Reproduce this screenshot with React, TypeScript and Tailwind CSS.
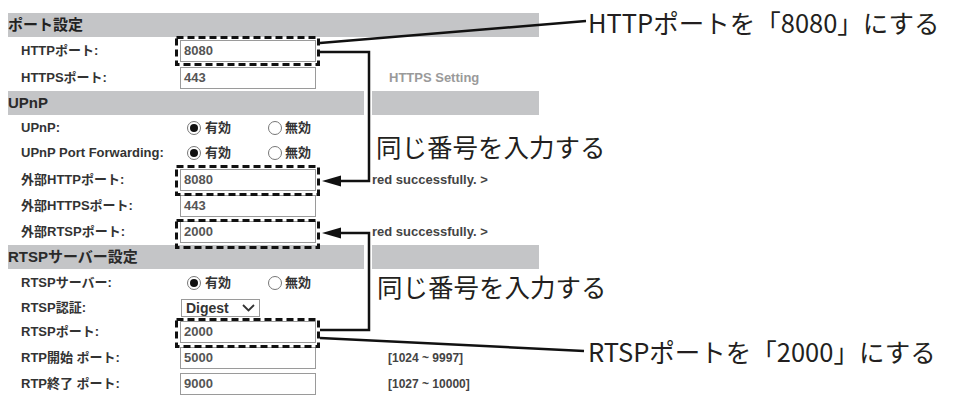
const FONT = "font-['Liberation_Sans','Noto_Sans_CJK_JP',sans-serif]";

type RowProps = {
  h: string;
  label: string;
  children?: React.ReactNode;
  right?: React.ReactNode;
};

function Row({ h, label, children, right }: RowProps) {
  return (
    <div className={`flex items-center ${h}`}>
      <div className="w-[172px] pl-[13px] text-[13px] font-bold text-[#333] whitespace-nowrap">{label}</div>
      <div className="w-[184px] flex items-center">{children}</div>
      <div className="w-[8px]" />
      <div className="w-[167px] flex items-center">{right}</div>
    </div>
  );
}

function Header({ title, split = true }: { title: string; split?: boolean }) {
  if (!split) {
    return (
      <div className="h-[24px] w-[531px] bg-[#c4c5c7] flex items-center text-[15px] font-bold text-[#222]">{title}</div>
    );
  }
  return (
    <div className="flex h-[24px]">
      <div className="w-[356px] bg-[#c4c5c7] flex items-center text-[15px] font-bold text-[#2a2a2a]">{title}</div>
      <div className="w-[8px]" />
      <div className="w-[167px] bg-[#c4c5c7]" />
    </div>
  );
}

function Field({ value }: { value: string }) {
  return (
    <div className="w-[136px] h-[22px] border border-[#9a9a9a] bg-white flex items-center pl-[3px] text-[13px] font-bold text-[#555]">
      {value}
    </div>
  );
}

function Radio({ on }: { on: boolean }) {
  return (
    <span className="w-[14px] h-[14px] rounded-full border border-[#777] bg-white flex items-center justify-center">
      {on && <span className="w-[8px] h-[8px] rounded-full bg-[#111]" />}
    </span>
  );
}

function RadioPair() {
  return (
    <div className="flex items-center pl-[7px] text-[13px] font-bold text-[#333]">
      <div className="w-[81px] flex items-center gap-[4px]">
        <Radio on />
        <span>有効</span>
      </div>
      <div className="flex items-center gap-[3px]">
        <Radio on={false} />
        <span>無効</span>
      </div>
    </div>
  );
}

function Note({ children }: { children: React.ReactNode }) {
  return <span className="text-[13px] font-bold text-[#444] whitespace-nowrap">{children}</span>;
}

export default function App() {
  const annot = "absolute text-[25.5px] leading-none text-[#231f20] font-['Noto_Sans_CJK_JP',sans-serif] whitespace-nowrap";
  return (
    <div className={`relative w-[954px] h-[406px] bg-white overflow-hidden ${FONT}`}>
      <div className="pt-[13px] pl-[8px] w-[539px]">
        <Header title="ポート設定" split={false} />
        <Row h="h-[28px]" label="HTTPポート:">
          <Field value="8080" />
        </Row>
        <Row
          h="h-[26px]"
          label="HTTPSポート:"
          right={<span className="pl-[17px] text-[13px] font-bold text-[#9a9a9a]">HTTPS Setting</span>}
        >
          <Field value="443" />
        </Row>
        <Header title="UPnP" />
        <Row h="h-[25px]" label="UPnP:">
          <RadioPair />
        </Row>
        <Row h="h-[26px]" label="UPnP Port Forwarding:">
          <RadioPair />
        </Row>
        <Row h="h-[27px]" label="外部HTTPポート:" right={<Note>red successfully. &gt;</Note>}>
          <Field value="8080" />
        </Row>
        <Row h="h-[25px]" label="外部HTTPSポート:">
          <Field value="443" />
        </Row>
        <Row h="h-[27px]" label="外部RTSPポート:" right={<Note>red successfully. &gt;</Note>}>
          <Field value="2000" />
        </Row>
        <Header title="RTSPサーバー設定" />
        <Row h="h-[28px]" label="RTSPサーバー:">
          <RadioPair />
        </Row>
        <Row h="h-[22px]" label="RTSP認証:">
          <div className="ml-[1px] w-[79px] h-[18px] border border-[#9a9a9a] flex items-center justify-between px-[4px] text-[14px] font-bold text-[#333]">
            <span>Digest</span>
            <svg width="13" height="8" viewBox="0 0 13 8">
              <path d="M1 1 L6.5 6.5 L12 1" fill="none" stroke="#333" strokeWidth="1.8" />
            </svg>
          </div>
        </Row>
        <Row h="h-[26px]" label="RTSPポート:">
          <Field value="2000" />
        </Row>
        <Row h="h-[26px]" label="RTP開始 ポート:" right={<span className="pl-[16px] text-[12px] font-bold text-[#444]">[1024 ~ 9997]</span>}>
          <Field value="5000" />
        </Row>
        <Row h="h-[26px]" label="RTP終了 ポート:" right={<span className="pl-[16px] text-[12px] font-bold text-[#444]">[1027 ~ 10000]</span>}>
          <Field value="9000" />
        </Row>
      </div>

      <svg className="absolute inset-0 pointer-events-none" width="954" height="406" viewBox="0 0 954 406">
        <g fill="none" stroke="#111" strokeWidth="3" strokeDasharray="7 4">
          <rect x="176.5" y="37.5" width="142" height="27" />
          <rect x="176.5" y="166.5" width="142" height="28" />
          <rect x="176.5" y="220.5" width="142" height="27" />
          <rect x="176.5" y="319.5" width="142" height="27" />
        </g>
        <g fill="none" stroke="#111" strokeWidth="2.5">
          <path d="M320 43 L586 21" />
          <path d="M320 52 H369 V181 H338" />
          <path d="M320 330 H369 V233 H338" />
          <path d="M320 338 L584 351" />
        </g>
        <polygon points="322,181 341,175.5 341,186.5" fill="#111" />
        <polygon points="322,233 341,227.5 341,238.5" fill="#111" />
      </svg>

      <div className={`${annot} left-[588px] top-[9px]`}>HTTPポートを「8080」にする</div>
      <div className={`${annot} left-[376px] top-[133px]`}>同じ番号を入力する</div>
      <div className={`${annot} left-[377px] top-[273px]`}>同じ番号を入力する</div>
      <div className={`${annot} left-[588px] top-[338px]`}>RTSPポートを「2000」にする</div>
    </div>
  );
}
